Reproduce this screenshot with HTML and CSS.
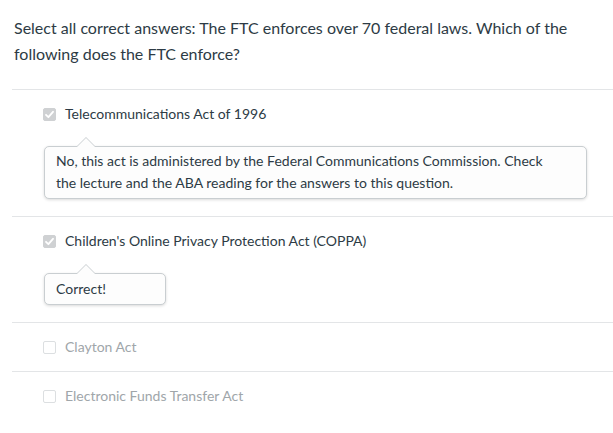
FILE: index.html
```html
<!DOCTYPE html>
<html>
<head>
<meta charset="utf-8">
<link rel="stylesheet" href="styles.css">
</head>
<body>
<div class="question">
  <p class="q-text">Select all correct answers: The FTC enforces over 70 federal laws. Which of the following does the FTC enforce?</p>
  <div class="answer">
    <div class="label">
      <span class="box checked"><svg width="13" height="13" viewBox="0 0 13 13"><path d="M3 6.8 L5.4 9.2 L10 3.8" fill="none" stroke="#fff" stroke-width="1.8" stroke-linecap="round" stroke-linejoin="round"/></svg></span>
      <span>Telecommunications Act of 1996</span>
    </div>
    <div class="callout wide">No, this act is administered by the Federal Communications Commission. Check the lecture and the ABA reading for the answers to this question.</div>
  </div>
  <div class="answer">
    <div class="label">
      <span class="box checked"><svg width="13" height="13" viewBox="0 0 13 13"><path d="M3 6.8 L5.4 9.2 L10 3.8" fill="none" stroke="#fff" stroke-width="1.8" stroke-linecap="round" stroke-linejoin="round"/></svg></span>
      <span>Children's Online Privacy Protection Act (COPPA)</span>
    </div>
    <div class="callout short">Correct!</div>
  </div>
  <div class="answer muted">
    <div class="label">
      <span class="box"></span>
      <span>Clayton Act</span>
    </div>
  </div>
  <div class="answer muted">
    <div class="label">
      <span class="box"></span>
      <span>Electronic Funds Transfer Act</span>
    </div>
  </div>
</div>
</body>
</html>
```
FILE: styles.css
```css
html, body {
  margin: 0;
  padding: 0;
  background: #fff;
}
body {
  font-family: Lato, "Open Sans", sans-serif;
  color: #2d3b45;
}
.question {
  padding: 15px 0 0 12px;
}
.q-text {
  margin: 0 0 22px 2px;
  font-size: 16px;
  line-height: 26px;
  padding-right: 30px;
}
.answer {
  border-top: 1px solid #e3e5e7;
  padding: 14px 26px 14px 31px;
}
.label {
  display: flex;
  align-items: center;
  gap: 9px;
  font-size: 14px;
  line-height: 20px;
}
.box {
  width: 13px;
  height: 13px;
  border-radius: 2px;
  box-sizing: border-box;
  border: 1px solid #dcdfe1;
  background: #fff;
  display: inline-flex;
  flex: none;
}
.box.checked {
  background: #cfd1d3;
  border-color: #cfd1d3;
}
.box svg { margin: -1px; }
.muted .label { color: #a0a6aa; }
.callout {
  position: relative;
  margin: 22px 0 3px 1px;
  border: 1px solid #c9ced1;
  border-radius: 5px;
  box-shadow: 0 1px 3px rgba(0, 0, 0, 0.15);
  background: #fdfdfd;
  font-size: 14px;
  line-height: 22px;
  padding: 3px 11px 4px 11px;
  box-sizing: border-box;
}
.callout.wide { width: 543px; padding-right: 26px; }
.callout.short { width: 122px; padding-top: 4px; }
.callout::before,
.callout::after {
  content: "";
  position: absolute;
  left: 32px;
  width: 0;
  height: 0;
  border-left: 9px solid transparent;
  border-right: 9px solid transparent;
}
.callout::before {
  top: -10px;
  border-bottom: 9px solid #c9ced1;
}
.callout::after {
  top: -9px;
  border-bottom: 9px solid #fdfdfd;
}
```
